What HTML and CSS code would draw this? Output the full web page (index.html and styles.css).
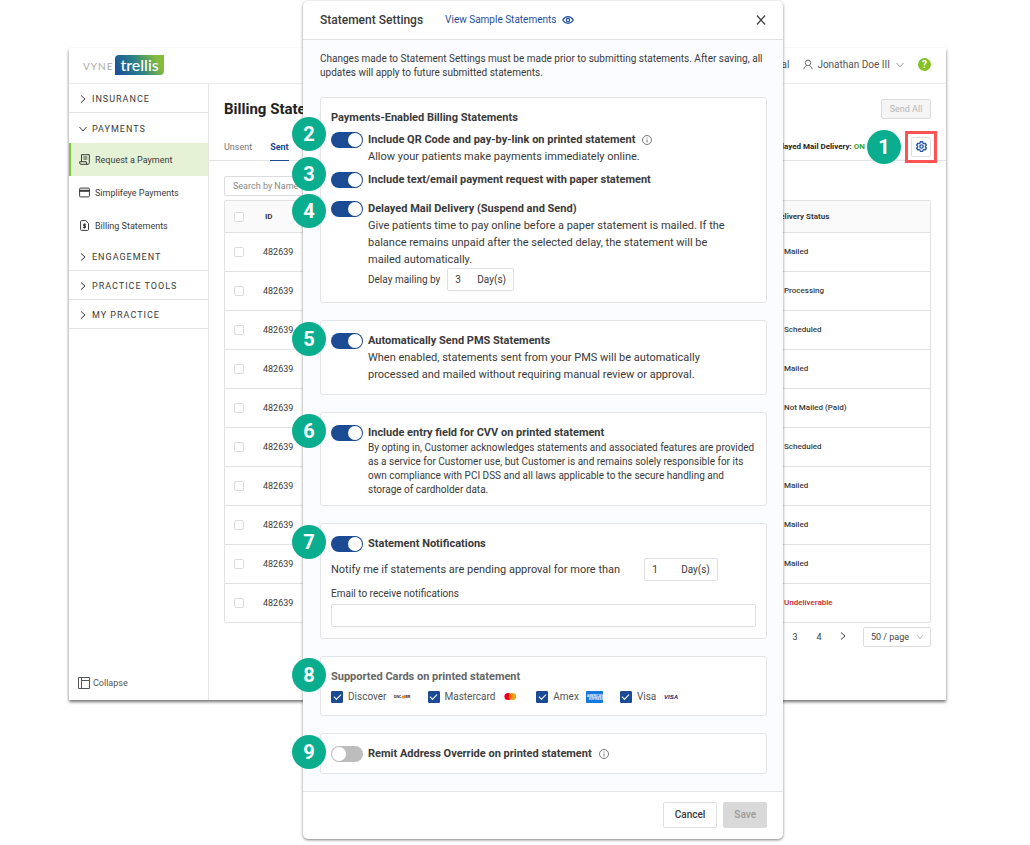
FILE: index.html
```html
<!DOCTYPE html>
<html lang="en">
<head>
    <meta charset="UTF-8">
    <title>Billing Statements - Statement Settings</title>
    <link rel="stylesheet" href="styles.css">
</head>
<body class="page">
<div class="app">
    <header class="topbar">
        <div class="logo"><span class="logo-vyne">VYNE</span><span class="logo-trellis">trellis</span></div>
        <div class="topbar-right">
            <span>Dental</span>
            <button class="user">
                <svg width="10" height="11" viewBox="0 0 12 12" fill="none" stroke="currentColor"><circle cx="6" cy="4" r="3.300"/><path d="M1 11.800c.3-2.500 1.600-4 3.500-4.600M11 11.800c-.3-2.500-1.600-4-3.500-4.600"/></svg>
                Jonathan Doe III
                <svg width="8" height="6" viewBox="0 0 8 6" fill="none" stroke="currentColor"><path d="M.5 1 4 4.800 7.500 1"/></svg>
            </button>
            <button class="help">?</button>
        </div>
    </header>
    <div class="main">
        <nav class="sidebar">
            <button class="group"><svg width="6" height="8" viewBox="0 0 6 8"><path d="M1 .5 5 4 1 7.500"/></svg>INSURANCE</button>
            <button class="group open"><svg width="8" height="6" viewBox="0 0 8 6"><path d="M.5 1 4 5 7.500 1"/></svg>PAYMENTS</button>
            <a class="item active" href="#">
                <svg width="11" height="11" viewBox="0 0 11 11"><path d="M2.500 7.500V.7h7.800v8c0 1-.6 1.600-1.500 1.600H2C1.200 10.300.7 9.800.7 9V7.700h6.600V9c0 .8.6 1.300 1.300 1.300M4.300 3h4M4.300 5h4"/></svg>
                Request a Payment
            </a>
            <a class="item" href="#">
                <svg width="11" height="11" viewBox="0 0 11 11"><rect x=".6" y="1.100" width="9.800" height="8.800" rx="1"/><path d="M.6 3.800h9.800" stroke-width="2"/></svg>
                Simplifeye Payments
            </a>
            <a class="item" href="#">
                <svg width="11" height="11" viewBox="0 0 11 11"><path d="M1.600 1.500c0-.5.3-.9.8-.9h4.300l2.800 2.800v6.100c0 .5-.3.9-.8.9H2.400c-.5 0-.8-.4-.8-.9z"/><path d="M7 4.300H4.500v1.500h2v1.700H4M5.500 3.500v5"/></svg>
                Billing Statements
            </a>
            <button class="group"><svg width="6" height="8" viewBox="0 0 6 8"><path d="M1 .5 5 4 1 7.500"/></svg>ENGAGEMENT</button>
            <button class="group"><svg width="6" height="8" viewBox="0 0 6 8"><path d="M1 .5 5 4 1 7.500"/></svg>PRACTICE TOOLS</button>
            <button class="group"><svg width="6" height="8" viewBox="0 0 6 8"><path d="M1 .5 5 4 1 7.500"/></svg>MY PRACTICE</button>
            <button class="collapse">
                <svg width="12" height="12" viewBox="0 0 12 12" fill="none" stroke="currentColor"><path d="M.5.5h11v11H.5zM3.500.5v11M3.500 3.500h8"/></svg>
                Collapse
            </button>
        </nav>
        <main class="content">
            <div class="heading">
                <h1>Billing Statements</h1>
                <button class="send-all" disabled>Send All</button>
            </div>
            <div class="tabs">
                <a class="tab" href="#">Unsent</a>
                <a class="tab current" href="#">Sent</a>
                <div class="delivery">Delayed Mail Delivery: <span class="on">ON</span></div>
                <span class="badge badge-inline">1</span>
                <span class="highlight">
                    <button class="settings" aria-label="Statement settings">
                        <svg width="11" height="11" viewBox="0 0 12 12" fill="none" stroke="currentColor" stroke-width="1.500" stroke-linejoin="round"><path d="M4.800.8h2.400l.4 1.500 1 .6 1.500-.4 1.200 2-1.100 1.100v1l1.100 1.100-1.200 2-1.500-.4-1 .6-.4 1.400H4.800l-.4-1.400-1-.6-1.500.4-1.200-2 1.100-1.100v-1L.7 4.500l1.200-2 1.500.4 1-.6z"/><circle cx="6" cy="6" r="1.800"/></svg>
                    </button>
                </span>
            </div>
            <div class="list">
                <input class="search" type="text" placeholder="Search by Name or ID" aria-label="Search">
                <table class="table">
                    <thead>
                    <tr><th><input class="tick" type="checkbox" aria-label="Select all"></th><th class="col-id">ID</th><th class="col-status">Delivery Status</th></tr>
                    </thead>
                    <tbody>
                    <tr><td><input class="tick" type="checkbox" aria-label="Select"></td><td>482639</td><td class="status">Mailed</td></tr>
                    <tr><td><input class="tick" type="checkbox" aria-label="Select"></td><td>482639</td><td class="status">Processing</td></tr>
                    <tr><td><input class="tick" type="checkbox" aria-label="Select"></td><td>482639</td><td class="status">Scheduled</td></tr>
                    <tr><td><input class="tick" type="checkbox" aria-label="Select"></td><td>482639</td><td class="status">Mailed</td></tr>
                    <tr><td><input class="tick" type="checkbox" aria-label="Select"></td><td>482639</td><td class="status">Not Mailed (Paid)</td></tr>
                    <tr><td><input class="tick" type="checkbox" aria-label="Select"></td><td>482639</td><td class="status">Scheduled</td></tr>
                    <tr><td><input class="tick" type="checkbox" aria-label="Select"></td><td>482639</td><td class="status">Mailed</td></tr>
                    <tr><td><input class="tick" type="checkbox" aria-label="Select"></td><td>482639</td><td class="status">Mailed</td></tr>
                    <tr><td><input class="tick" type="checkbox" aria-label="Select"></td><td>482639</td><td class="status">Mailed</td></tr>
                    <tr><td><input class="tick" type="checkbox" aria-label="Select"></td><td>482639</td><td class="status failed">Undeliverable</td></tr>
                    </tbody>
                </table>
                <div class="pager">
                    <button>3</button>
                    <button>4</button>
                    <button aria-label="Next page"><svg width="6" height="8" viewBox="0 0 6 8" fill="none" stroke="currentColor"><path d="M1 .5 5 4 1 7.500"/></svg></button>
                    <div class="page-size">
                        <select aria-label="Page size"><option>50 / page</option></select>
                        <svg width="8" height="6" viewBox="0 0 8 6" fill="none" stroke="currentColor"><path d="M1 1 4 5 7 1"/></svg>
                    </div>
                </div>
            </div>
        </main>
    </div>
</div>

<div class="overlay">
    <form class="modal" role="dialog" aria-labelledby="modal-title">
        <header class="modal-header">
            <h2 id="modal-title">Statement Settings</h2>
            <a class="sample" href="#">View Sample Statements
                <svg width="12" height="8" viewBox="0 0 12 8" fill="none" stroke="currentColor" stroke-width="1.200"><path d="M.7 4C2 1.800 3.800.7 6 .7S10 1.800 11.300 4C10 6.200 8.200 7.300 6 7.300S2 6.200.7 4z"/><circle cx="6" cy="4" r="1.700"/></svg>
            </a>
            <button class="close" type="button" aria-label="Close"><svg width="10" height="10" viewBox="0 0 10 10" stroke="currentColor" stroke-width="1.200"><path d="m1 .5 8 9M9 .5l-8 9"/></svg></button>
        </header>
        <div class="modal-body">
            <p class="intro">Changes made to Statement Settings must be made prior to submitting statements. After saving, all updates will apply to future submitted statements.</p>

            <section class="card">
                <h3>Payments-Enabled Billing Statements</h3>
                <div class="option first">
                    <span class="badge raised">2</span>
                    <input class="toggle" type="checkbox" id="qr" checked>
                    <label for="qr">Include QR Code and pay-by-link on printed statement</label>
                    <svg class="info" width="10" height="10" viewBox="0 0 10 10"><circle cx="5" cy="5" r="4.500"/><path d="M5 4.500v3M5 2.500v1"/></svg>
                </div>
                <p class="desc">Allow your patients make payments immediately online.</p>
                <div class="option second">
                    <span class="badge raised">3</span>
                    <input class="toggle" type="checkbox" id="text" checked>
                    <label for="text">Include text/email payment request with paper statement</label>
                </div>
                <div class="option third">
                    <span class="badge lowered">4</span>
                    <input class="toggle" type="checkbox" id="delay" checked>
                    <label for="delay">Delayed Mail Delivery (Suspend and Send)</label>
                </div>
                <p class="desc">Give patients time to pay online before a paper statement is mailed. If the balance remains unpaid after the selected delay, the statement will be mailed automatically.</p>
                <div class="delay">
                    <label for="delay-days">Delay mailing by</label>
                    <span class="days"><input type="text" id="delay-days" value="3">Day(s)</span>
                </div>
            </section>

            <section class="card">
                <div class="option">
                    <span class="badge">5</span>
                    <input class="toggle" type="checkbox" id="auto" checked>
                    <label for="auto">Automatically Send PMS Statements</label>
                </div>
                <p class="desc">When enabled, statements sent from your PMS will be automatically processed and mailed without requiring manual review or approval.</p>
            </section>

            <section class="card compact">
                <div class="option">
                    <span class="badge">6</span>
                    <input class="toggle" type="checkbox" id="cvv" checked>
                    <label for="cvv">Include entry field for CVV on printed statement</label>
                </div>
                <p class="desc small">By opting in, Customer acknowledges statements and associated features are provided as a service for Customer use, but Customer is and remains solely responsible for its own compliance with PCI DSS and all laws applicable to the secure handling and storage of cardholder data.</p>
            </section>

            <section class="card">
                <div class="option">
                    <span class="badge">7</span>
                    <input class="toggle" type="checkbox" id="notify" checked>
                    <label for="notify">Statement Notifications</label>
                </div>
                <div class="notify">
                    <label for="notify-days">Notify me if statements are pending approval for more than</label>
                    <span class="days wide"><input type="text" id="notify-days" value="1">Day(s)</span>
                </div>
                <label class="email-label" for="email">Email to receive notifications</label>
                <input class="email" type="email" id="email">
            </section>

            <section class="card">
                <div class="option">
                    <span class="badge">8</span>
                    <h3 class="muted">Supported Cards on printed statement</h3>
                </div>
                <div class="brands">
                    <label class="brand"><input class="check" type="checkbox" checked>Discover
                        <svg width="18" height="12" viewBox="0 0 18 12"><rect x=".5" y=".5" width="17" height="11" rx="1" fill="#fff" stroke="#f5f5f7"/><text class="discover-text" x="1" y="7">DISC</text><circle cx="10" cy="6" r="1.500" fill="#f28a1c"/><text class="discover-text" x="11" y="7">VER</text></svg>
                    </label>
                    <label class="brand"><input class="check" type="checkbox" checked>Mastercard
                        <svg width="18" height="12" viewBox="0 0 18 12"><circle cx="7" cy="5.500" r="3.600" fill="#eb001b"/><circle cx="11.500" cy="5.500" r="3.600" fill="#f79e1b"/><path d="M9.250 2.700a3.600 3.600 0 0 1 0 5.600 3.600 3.600 0 0 1 0-5.600z" fill="#ff5f00"/></svg>
                    </label>
                    <label class="brand"><input class="check" type="checkbox" checked>Amex
                        <svg width="18" height="12" viewBox="0 0 18 12"><rect x="1" width="17" height="12" rx="1" fill="#1479dc"/><text class="amex-text" x="2" y="6">AMERICAN</text><text class="amex-text" x="4" y="9">EXPRESS</text></svg>
                    </label>
                    <label class="brand"><input class="check" type="checkbox" checked>Visa
                        <svg width="18" height="12" viewBox="0 0 18 12"><rect x=".5" y=".5" width="17" height="11" rx="1" fill="#fff" stroke="#f5f5f7"/><text class="visa-text" x="2" y="8">VISA</text></svg>
                    </label>
                </div>
            </section>

            <section class="card">
                <div class="option">
                    <span class="badge">9</span>
                    <input class="toggle" type="checkbox" id="remit">
                    <label for="remit">Remit Address Override on printed statement</label>
                    <svg class="info" width="10" height="10" viewBox="0 0 10 10"><circle cx="5" cy="5" r="4.500"/><path d="M5 4.500v3M5 2.500v1"/></svg>
                </div>
            </section>
        </div>
        <footer class="modal-footer">
            <button class="btn" type="button">Cancel</button>
            <button class="btn save" type="submit" disabled>Save</button>
        </footer>
    </form>
</div>
</body>
</html>
```
FILE: styles.css
```css
* {
    box-sizing: border-box;
}

.page {
    margin: 0;
    padding: 48px 84px 0 69px;
    min-height: 100vh;
    position: relative;
    background: #fff;
    color: #3a3a3a;
    font: 9px/14px Roboto, sans-serif;
}

h1, h2, h3, p {
    margin: 0;
}

a {
    color: inherit;
    text-decoration: none;
}

button, input, select {
    font: inherit;
    color: inherit;
    margin: 0;
}

button {
    background: none;
    border: 0;
    padding: 0;
}

svg {
    flex: none;
}

/* app window */
.app {
    background: #fff;
    box-shadow: 0 2px 3px rgba(0, 0, 0, 0.55);
}

.topbar {
    display: flex;
    justify-content: space-between;
    align-items: center;
    height: 36px;
    padding: 0 15px 2px 14px;
    border-bottom: 1px solid #ececec;
}

.logo {
    display: flex;
    align-items: center;
    gap: 2px;
}

.logo-vyne {
    font: 10px/20px Lato, sans-serif;
    letter-spacing: 1px;
    color: #aaa;
    padding-top: 2px;
}

.logo-trellis {
    font: 500 16px/19px Lato, sans-serif;
    color: #fff;
    padding: 0 5px 1px;
    border-radius: 4px 0 4px 0;
    background: linear-gradient(60deg, #1c4f9c 5%, #2a8088 45%, #86bd3c 85%);
}

.topbar-right {
    display: flex;
    align-items: center;
    gap: 14px;
    font-size: 10px;
    color: #555;
}

.user {
    display: flex;
    align-items: center;
    gap: 4px;
}

.user svg:last-child {
    margin-left: 2px;
    color: #999;
}

.help {
    width: 13px;
    height: 13px;
    line-height: 13px;
    border-radius: 50%;
    background: #85c226;
    color: #fff;
    font-weight: 700;
}

.main {
    display: flex;
    min-height: 616px;
}

.sidebar {
    display: flex;
    flex-direction: column;
    width: 140px;
    border-right: 1px solid #e4e4e4;
    flex: none;
}

.sidebar svg {
    fill: none;
    stroke: currentColor;
}

.group {
    display: flex;
    align-items: center;
    gap: 5px;
    height: 29px;
    padding: 1px 0 0 10px;
    border-bottom: 1px solid #e4e4e4;
    letter-spacing: 1px;
}

.group svg {
    width: 8px;
}

.group.open {
    height: 30px;
    border-bottom: 0;
}

.item {
    display: flex;
    align-items: center;
    gap: 5px;
    height: 33px;
    padding-left: 10px;
}

.item.active {
    padding-left: 8px;
    border-left: 2px solid #82c341;
    background: #e6f2d6;
}

.collapse {
    display: flex;
    align-items: center;
    gap: 3px;
    margin: auto 0 10px 9px;
    color: #555;
}

.content {
    flex: 1;
}

.heading {
    display: flex;
    justify-content: space-between;
    align-items: center;
    height: 49px;
    padding: 0 15px;
}

.heading h1 {
    font-size: 15px;
    line-height: 20px;
    font-weight: 700;
    color: #222;
}

.send-all {
    width: 50px;
    height: 20px;
    border: 1px solid #dcdcdc;
    border-radius: 2px;
    background: #f5f5f5;
    color: #b5b5b5;
}

.tabs {
    display: flex;
    align-items: center;
    height: 28px;
    padding: 0 15px;
    border-bottom: 1px solid #e4e4e4;
}

.tab {
    height: 28px;
    line-height: 28px;
    margin-right: 18px;
    color: #777;
}

.tab.current {
    border-bottom: 1px solid #1b4b93;
    color: #1b4b93;
    font-weight: 700;
}

.delivery {
    margin-left: auto;
    font-size: 8px;
    font-weight: 700;
    color: #222;
}

.on {
    color: #3aa52a;
}

.highlight {
    margin-left: 10px;
    outline: 3px solid #fb5254;
    outline-offset: 3px;
}

.settings {
    display: flex;
    align-items: center;
    justify-content: center;
    width: 20px;
    height: 20px;
    border: 1px solid #e0e0e0;
    border-radius: 2px;
    color: #2a5aa6;
}

.list {
    padding: 15px;
}

.search {
    display: block;
    width: 150px;
    height: 20px;
    padding: 0 8px;
    border: 1px solid #dcdcdc;
    border-radius: 2px;
}

.search::placeholder {
    color: #888;
}

.table {
    width: 100%;
    margin-top: 4px;
    border: 1px solid #e2e2e2;
    border-radius: 2px;
    border-spacing: 0;
}

.table th {
    height: 31px;
    padding: 0;
    background: #fafafa;
    text-align: left;
    font-size: 8px;
}

.table td {
    height: 39px;
    padding: 0;
    border-top: 1px solid #e2e2e2;
}

.table th:first-child,
.table td:first-child {
    width: 38px;
    padding-left: 9px;
}

.table .col-id {
    padding-left: 2px;
}

.table .col-status {
    width: 161px;
    padding-left: 6px;
}

.tick {
    display: block;
    appearance: none;
    width: 10px;
    height: 10px;
    border: 1px solid #dcdcdc;
    border-radius: 2px;
    background: #fff;
}

.table .status {
    padding-left: 15px;
    font-size: 8px;
    font-weight: 500;
}

.table .failed {
    color: #c8242c;
}

.pager {
    display: flex;
    justify-content: flex-end;
    align-items: center;
    margin-top: 4px;
}

.pager button {
    width: 24px;
}

.page-size {
    display: flex;
    align-items: center;
    margin-left: 8px;
    width: 68px;
    height: 20px;
    padding: 0 6px 0 7px;
    border: 1px solid #dcdcdc;
    border-radius: 2px;
    color: #444;
}

.page-size select {
    appearance: none;
    flex: 1;
    border: 0;
    padding: 0;
    background: none;
}

.page-size svg {
    color: #bbb;
}

/* numbered callouts */
.badge {
    position: absolute;
    left: -39px;
    top: -10px;
    width: 34px;
    height: 34px;
    border-radius: 50%;
    background: #0aae8e;
    color: #fff;
    font-size: 20px;
    line-height: 34px;
    font-weight: 700;
    text-align: center;
}

.badge.raised {
    top: -14px;
}

.badge.lowered {
    top: -6px;
}

.badge-inline {
    position: static;
    margin-left: 2px;
    flex: none;
}

/* settings dialog */
.overlay {
    position: absolute;
    top: 1px;
    left: 0;
    right: 0;
    display: flex;
    justify-content: center;
    padding-left: 56px;
}

.modal {
    width: 480px;
    border-radius: 5px;
    background: #fff;
    box-shadow: 0 1px 3px rgba(0, 0, 0, 0.5);
}

.modal-header {
    display: flex;
    align-items: center;
    height: 39px;
    padding: 0 17px;
    border-bottom: 1px solid #e0e2e6;
}

.modal-header h2 {
    font-size: 12px;
    font-weight: 500;
}

.sample {
    display: flex;
    align-items: center;
    gap: 6px;
    margin-left: 22px;
    font-size: 10px;
    color: #1f4f9c;
}

.close {
    display: flex;
    margin-left: auto;
}

.modal-body {
    display: flex;
    flex-direction: column;
    gap: 17px;
    padding: 12px 16px 17px 17px;
    background: #fbfcff;
    border-bottom: 1px solid #e4e6ea;
}

.intro {
    font-size: 10px;
    line-height: 14px;
}

.card {
    padding: 11px 10px;
    border: 1px solid #e2e4e8;
    border-radius: 3px;
    background: #fff;
}

.card.compact {
    padding-bottom: 8px;
}

.card h3 {
    font-size: 11px;
    line-height: 17px;
    font-weight: 700;
}

.card .muted {
    color: #666;
}

.option {
    position: relative;
    display: flex;
    align-items: center;
    min-height: 17px;
    font-size: 11px;
    font-weight: 700;
}

.first {
    margin-top: 5px;
}

.second {
    margin-top: 6px;
}

.third {
    margin-top: 12px;
}

.toggle {
    appearance: none;
    width: 32px;
    height: 16px;
    padding: 1px;
    margin-right: 5px;
    border-radius: 8px;
    background: #bdbdbd;
}

.toggle::before {
    content: "";
    display: block;
    width: 14px;
    height: 14px;
    border-radius: 50%;
    background: #fff;
}

.toggle:checked {
    background: #1b4b93;
}

.toggle:checked::before {
    margin-left: auto;
}

.info {
    margin-left: 7px;
    fill: none;
    stroke: #777;
}

.desc {
    max-width: 372px;
    margin-left: 37px;
    font-size: 11px;
    line-height: 17px;
}

.desc.small {
    max-width: none;
    font-size: 10px;
    line-height: 14px;
}

.delay, .notify {
    display: flex;
    align-items: center;
    gap: 7px;
}

.delay {
    margin-left: 37px;
    font-size: 10px;
}

.notify {
    margin-top: 6px;
    gap: 24px;
    font-size: 11px;
}

.days {
    display: flex;
    align-items: center;
    height: 23px;
    padding: 0 7px;
    border: 1px solid #dcdfe4;
    border-radius: 2px;
    background: #fff;
    font-size: 10px;
}

.days input {
    width: 22px;
    padding: 0;
    border: 0;
}

.days.wide input {
    width: 29px;
}

.email-label {
    display: block;
    margin: 6px 0 3px;
    font-size: 10px;
}

.email {
    display: block;
    width: 100%;
    height: 23px;
    border: 1px solid #dcdfe4;
    border-radius: 2px;
}

.brands {
    display: flex;
    gap: 17px;
    margin-top: 5px;
}

.brand {
    display: flex;
    align-items: center;
    gap: 5px;
    font-size: 10px;
    color: #555;
}

.brand svg {
    margin-left: 1px;
}

.check {
    appearance: none;
    display: grid;
    place-items: center;
    width: 12px;
    height: 12px;
    border-radius: 1px;
    border: 1px solid #1b4b93;
}

.check:checked {
    background: #1b4b93;
}

.check:checked::before {
    content: "";
    width: 6px;
    height: 3px;
    margin-bottom: 2px;
    border: solid #fff;
    border-width: 0 0 1px 1px;
    transform: rotate(-45deg);
}

.discover-text {
    font: bold 3px "Liberation Sans", sans-serif;
}

.amex-text {
    font: bold 3px "Liberation Sans", sans-serif;
    fill: #fff;
}

.visa-text {
    font: italic bold 6px "Liberation Sans", sans-serif;
    fill: #1a1f71;
}

.modal-footer {
    display: flex;
    justify-content: flex-end;
    gap: 6px;
    padding: 10px 16px 11px;
}

.btn {
    height: 26px;
    padding: 0 11px;
    border: 1px solid #dcdfe4;
    border-radius: 2px;
    font-size: 10px;
    font-weight: 500;
}

.btn.save {
    padding: 0 10px;
    border-color: #d9d9d9;
    background: #d9d9d9;
    color: #999;
}
```
